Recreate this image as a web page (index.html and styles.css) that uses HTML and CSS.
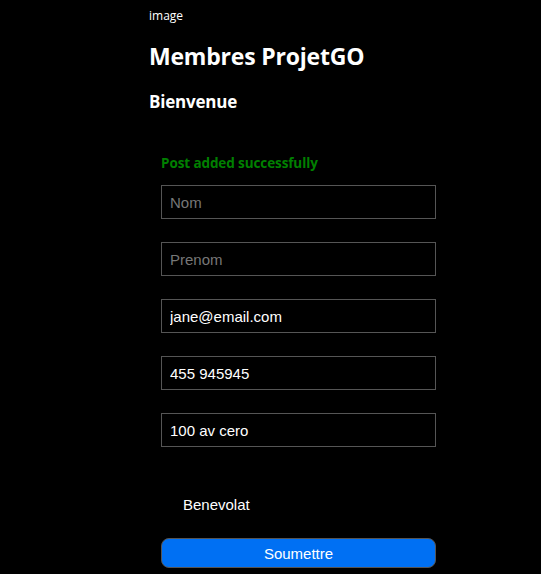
FILE: index.html
```html
<!DOCTYPE html>
<html lang="fr">
<head>
<meta charset="utf-8">
<title>Membres ProjetGO</title>
<link rel="stylesheet" href="styles.css">
</head>
<body>
<div class="page">
  <div class="img-alt">image</div>
  <h1 class="title">Membres ProjetGO</h1>
  <h2 class="subtitle">Bienvenue</h2>
  <form class="form">
    <p class="success">Post added successfully</p>
    <input class="field" type="text" placeholder="Nom">
    <input class="field" type="text" placeholder="Prenom">
    <input class="field" type="text" value="jane@email.com">
    <input class="field" type="text" value="455 945945">
    <input class="field" type="text" value="100 av cero">
    <label class="check"><input class="check-box" type="checkbox"><span>Benevolat</span></label>
    <button class="submit" type="button">Soumettre</button>
  </form>
</div>
</body>
</html>
```
FILE: styles.css
```css
html, body {
  margin: 0;
  padding: 0;
  background: #000;
  color: #fff;
}
body {
  font-family: "Open Sans", "Noto Sans", sans-serif;
}
.page {
  padding-left: 149px;
  padding-top: 8px;
  width: 300px;
}
.img-alt {
  font-size: 12px;
  line-height: 16px;
}
.title {
  font-size: 23px;
  font-weight: 700;
  margin: 16px 0 0 0;
  line-height: 32px;
  letter-spacing: -0.2px;
}
.subtitle {
  font-size: 17px;
  font-weight: 700;
  margin: 18px 0 0 0;
  line-height: 24px;
  letter-spacing: -0.2px;
}
.form {
  display: flex;
  flex-direction: column;
  padding: 0 12px;
  margin-top: 40px;
  width: 275px;
}
.success {
  color: #008000;
  font-weight: 700;
  font-size: 13.5px;
  line-height: 18px;
  margin: 0 0 13px 0;
  letter-spacing: -0.1px;
}
.field {
  box-sizing: border-box;
  width: 275px;
  height: 34px;
  margin: 0 0 23px 0;
  padding: 0 8px;
  background: #000;
  color: #fff;
  border: 1px solid #555;
  border-radius: 0;
  font-family: "Liberation Sans", Arial, sans-serif;
  font-size: 15px;
  outline: none;
}
.field::placeholder {
  color: #777;
}
.check {
  display: flex;
  align-items: center;
  height: 24px;
  margin-top: 22px;
  font-family: "Liberation Sans", Arial, sans-serif;
  font-size: 15px;
}
.check-box {
  appearance: none;
  -webkit-appearance: none;
  width: 14px;
  height: 14px;
  margin: 0 8px 0 0;
  border: none;
  background: #000;
}
.submit {
  margin-top: 22px;
  width: 275px;
  height: 30px;
  background: #0070f3;
  color: #fff;
  border: 1px solid #555;
  border-radius: 8px;
  font-family: "Liberation Sans", Arial, sans-serif;
  font-size: 15px;
  padding: 0;
}
```
